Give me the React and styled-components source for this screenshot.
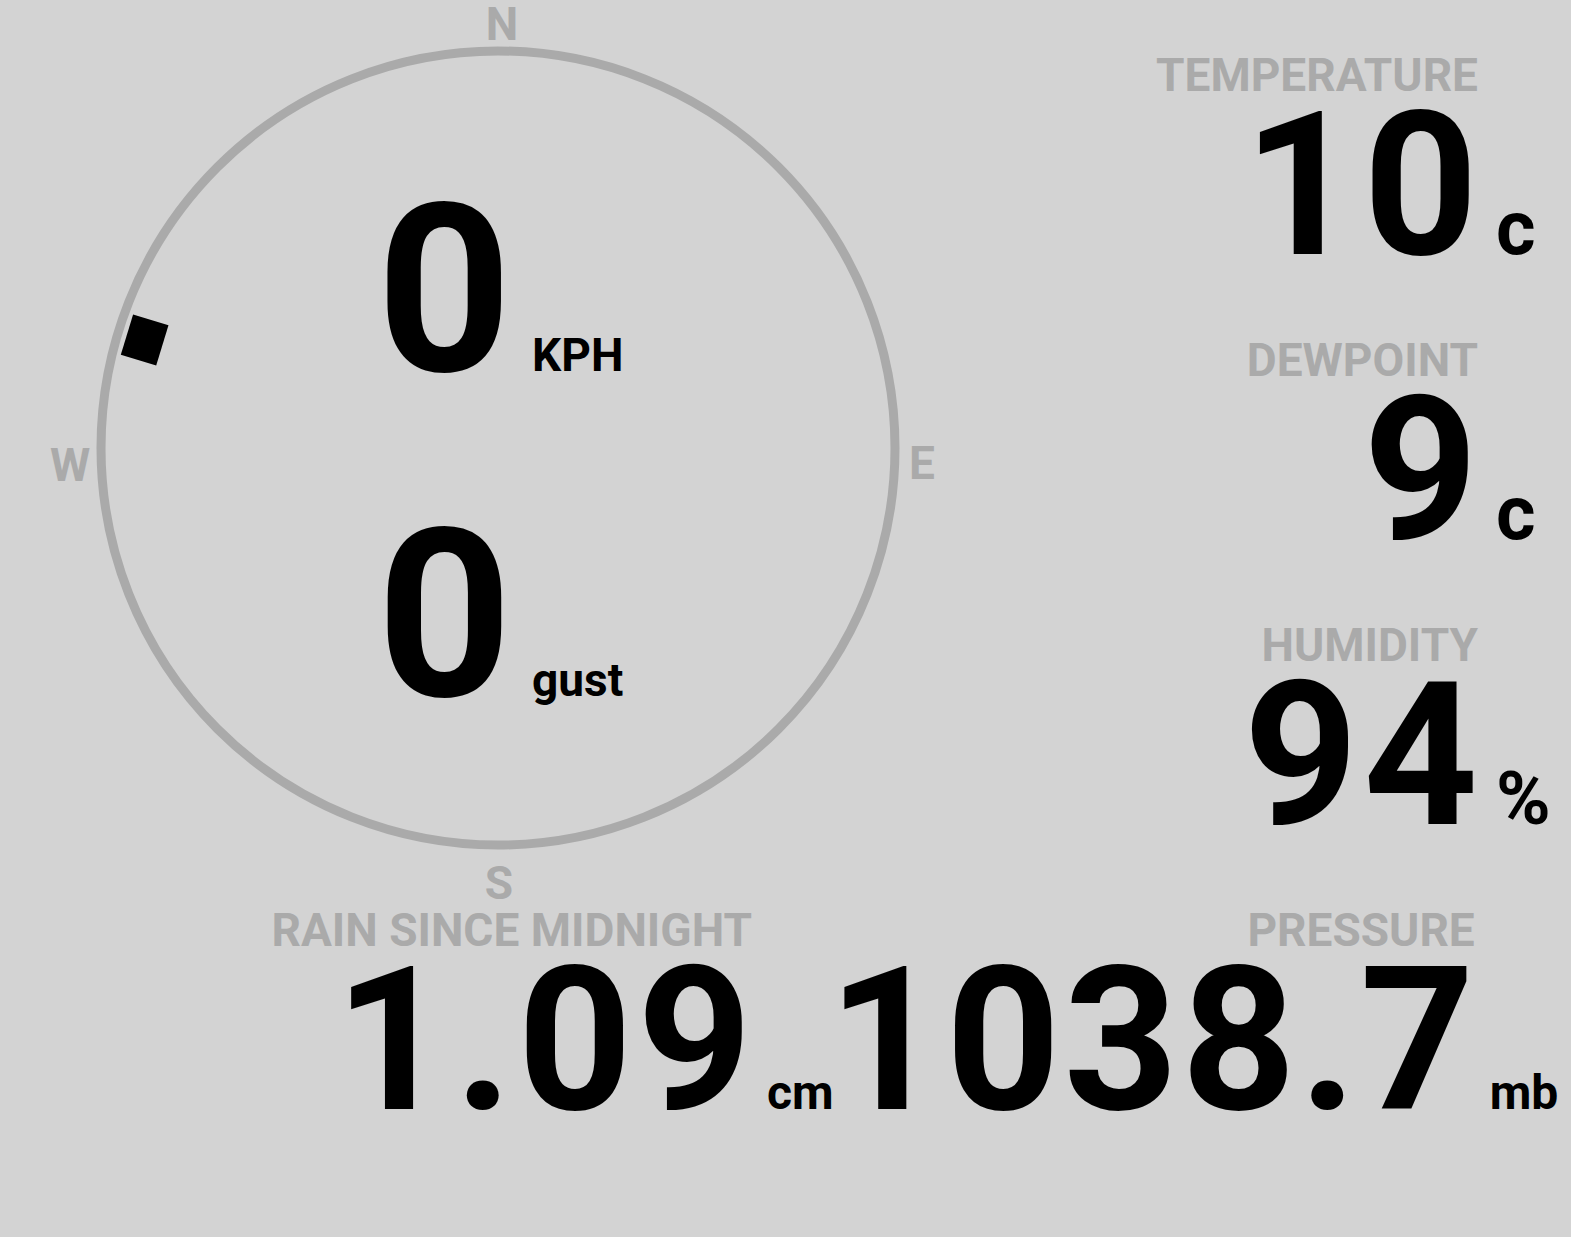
import styled, { createGlobalStyle } from "styled-components";

const GlobalStyle = createGlobalStyle`
  html, body {
    margin: 0;
    padding: 0;
    background: #d3d3d3;
  }
  body {
    font-family: Roboto, "Liberation Sans", sans-serif;
    font-weight: 700;
  }
`;

const Page = styled.div`
  width: 1571px;
  height: 1237px;
  display: flex;
  flex-direction: column;
  overflow: hidden;
`;

const TopRow = styled.div`
  display: grid;
  grid-template-columns: 1000px 1fr;
`;

const BottomRow = styled.div`
  display: grid;
  grid-template-columns: 828px auto;
  justify-content: space-between;
  justify-items: end;
  padding-right: 21px;
`;

const StatColumn = styled.div`
  display: flex;
  flex-direction: column;
  align-items: flex-end;
  gap: 71px;
  padding-top: 52px;
  padding-right: 3px;
`;

const StatBox = styled.div`
  display: flex;
  flex-direction: column;
  align-items: flex-end;
  gap: 8px;
`;

const Label = styled.div`
  margin-right: ${(p) => p.$unitWidth}px;
  font-size: 46px;
  line-height: 1;
  color: #aaaaaa;
  white-space: nowrap;
`;

const ValueRow = styled.div`
  display: flex;
  align-items: baseline;
`;

const Number = styled.span`
  font-size: 200px;
  line-height: 0.8;
  letter-spacing: ${(p) => p.$spacing}px;
  margin-right: -${(p) => p.$spacing}px;
  color: #000;
  white-space: nowrap;
`;

const Unit = styled.span`
  width: ${(p) => p.$width}px;
  flex: none;
  box-sizing: border-box;
  padding-left: ${(p) => (p.$width > 80 ? 18 : 15)}px;
  font-size: ${(p) => p.$size}px;
  line-height: 1;
  color: #000;
`;

const Compass = styled.div`
  display: grid;
  width: 1000px;
  height: 907px;
  > * {
    grid-area: 1 / 1;
  }
`;

const Dial = styled.svg`
  display: block;
  width: 1000px;
  height: 907px;
  overflow: visible;
  text {
    font-family: Roboto, "Liberation Sans", sans-serif;
    font-weight: 700;
    font-size: 46px;
    fill: #aaaaaa;
  }
`;

const Readout = styled.div`
  display: flex;
  flex-direction: column;
  align-items: center;
  justify-content: center;
  gap: 136px;
`;

const SpeedRow = styled.div`
  display: flex;
  align-items: baseline;
  gap: 20px;
`;

const Speed = styled.span`
  font-size: 236px;
  line-height: 0.8;
  color: #000;
`;

const SpeedUnit = styled.span`
  font-size: 46px;
  line-height: 1;
  color: #000;
`;

const Stat = ({ label, value, unit, unitSize = 76, unitWidth = 90, spacing = 5 }) => (
  <StatBox>
    <Label $unitWidth={unitWidth}>{label}</Label>
    <ValueRow>
      <Number $spacing={spacing}>{value}</Number>
      <Unit $size={unitSize} $width={unitWidth}>{unit}</Unit>
    </ValueRow>
  </StatBox>
);

const CX = 498;
const CY = 448;
const R = 397;

const WindDial = ({ bearing }) => (
  <Dial viewBox="0 0 1000 907">
    <circle cx={CX} cy={CY} r={R} fill="none" stroke="#aaaaaa" strokeWidth="9" />
    <g transform={`rotate(${bearing} ${CX} ${CY})`}>
      <rect x={CX - 21} y={CY - 370 - 18} width="42" height="37" fill="#000" />
    </g>
    <text x="502" y="40" textAnchor="middle">N</text>
    <text x="70" y="481" textAnchor="middle">W</text>
    <text x="922" y="479" textAnchor="middle">E</text>
    <text x="499" y="899" textAnchor="middle">S</text>
  </Dial>
);

export default function App() {
  return (
    <Page>
      <GlobalStyle />
      <TopRow>
        <Compass>
          <WindDial bearing={287} />
          <Readout>
            <SpeedRow>
              <Speed>0</Speed>
              <SpeedUnit>KPH</SpeedUnit>
            </SpeedRow>
            <SpeedRow>
              <Speed>0</Speed>
              <SpeedUnit>gust</SpeedUnit>
            </SpeedRow>
          </Readout>
        </Compass>
        <StatColumn>
          <Stat label="TEMPERATURE" value="10" unit="c" />
          <Stat label="DEWPOINT" value="9" unit="c" />
          <Stat label="HUMIDITY" value="94" unit="%" unitSize={74} />
        </StatColumn>
      </TopRow>
      <BottomRow>
        <Stat label="RAIN SINCE MIDNIGHT" value="1.09" unit="cm" unitSize={48} unitWidth={76} />
        <Stat label="PRESSURE" value="1038.7" unit="mb" unitSize={48} unitWidth={76} spacing={3} />
      </BottomRow>
    </Page>
  );
}
